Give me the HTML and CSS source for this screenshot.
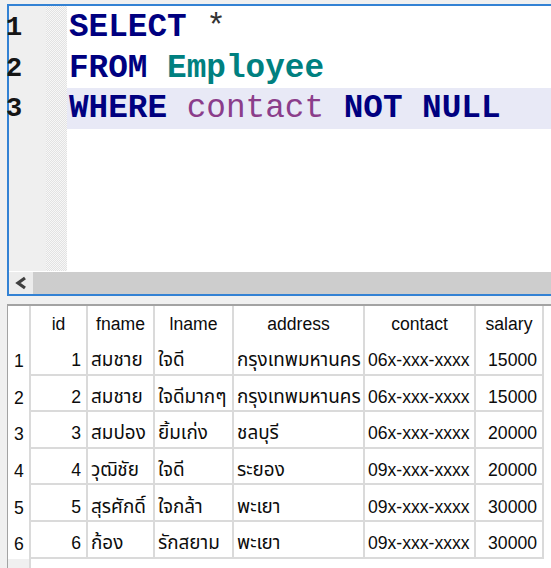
FILE: index.html
```html
<!DOCTYPE html>
<html>
<head>
<meta charset="utf-8">
<link rel="stylesheet" href="styles.css">
</head>
<body>
<div class="app">
  <div class="editor">
    <div class="editor-body">
      <div class="gutter">
        <div class="ln">1</div>
        <div class="ln">2</div>
        <div class="ln">3</div>
      </div>
      <div class="fold"></div>
      <div class="code">
        <div class="line"><span class="kw">SELECT</span> <span class="op">*</span></div>
        <div class="line"><span class="kw">FROM</span> <span class="tbl">Employee</span></div>
        <div class="line current"><span class="kw">WHERE</span> <span class="col">contact</span> <span class="kw">NOT NULL</span></div>
      </div>
    </div>
    <div class="hscroll">
      <div class="arrow"><svg class="chev" width="14" height="14" viewBox="0 0 14 14"><polyline points="11,2 4,7 11,12" fill="none" stroke="#404040" stroke-width="3.2"/></svg></div>
      <div class="track"></div>
    </div>
  </div>
  <div class="grid">
    <table>
      <colgroup>
        <col class="c-rh"><col class="c-id"><col class="c-fn"><col class="c-ln"><col class="c-ad"><col class="c-ct"><col class="c-sa"><col>
      </colgroup>
      <thead>
        <tr><th class="rh"></th><th>id</th><th>fname</th><th>lname</th><th>address</th><th>contact</th><th>salary</th><th class="rest"></th></tr>
      </thead>
      <tbody>
        <tr><td class="rh">1</td><td class="num">1</td><td class="th">สมชาย</td><td class="th">ใจดี</td><td class="th">กรุงเทพมหานคร</td><td>06x-xxx-xxxx</td><td class="num">15000</td><td class="rest"></td></tr>
        <tr><td class="rh">2</td><td class="num">2</td><td class="th">สมชาย</td><td class="th">ใจดีมากๆ</td><td class="th">กรุงเทพมหานคร</td><td>06x-xxx-xxxx</td><td class="num">15000</td><td class="rest"></td></tr>
        <tr><td class="rh">3</td><td class="num">3</td><td class="th">สมปอง</td><td class="th">ยิ้มเก่ง</td><td class="th">ชลบุรี</td><td>06x-xxx-xxxx</td><td class="num">20000</td><td class="rest"></td></tr>
        <tr><td class="rh">4</td><td class="num">4</td><td class="th">วุฒิชัย</td><td class="th">ใจดี</td><td class="th">ระยอง</td><td>09x-xxx-xxxx</td><td class="num">20000</td><td class="rest"></td></tr>
        <tr><td class="rh">5</td><td class="num">5</td><td class="th">สุรศักดิ์</td><td class="th">ใจกล้า</td><td class="th">พะเยา</td><td>09x-xxx-xxxx</td><td class="num">30000</td><td class="rest"></td></tr>
        <tr><td class="rh">6</td><td class="num">6</td><td class="th">ก้อง</td><td class="th">รักสยาม</td><td class="th">พะเยา</td><td>09x-xxx-xxxx</td><td class="num">30000</td><td class="rest"></td></tr>
        <tr class="filler"><td class="rh"></td><td colspan="7" class="rest"></td></tr>
      </tbody>
    </table>
  </div>
</div>
</body>
</html>
```

FILE: styles.css
```css
html, body {
  margin: 0;
  padding: 0;
}
body {
  background: #f0f0f0;
  width: 551px;
  height: 568px;
  overflow: hidden;
}
.app {
  padding-top: 4px;
  display: flex;
  flex-direction: column;
}
.editor {
  margin-left: 7px;
  width: 560px;
  border-top: 2px solid #3382d4;
  border-left: 2px solid #3382d4;
  border-bottom: 2px solid #3382d4;
  background: #ffffff;
  display: flex;
  flex-direction: column;
}
.editor-body {
  height: 266px;
  display: flex;
}
.gutter {
  width: 37px;
  height: 265px;
  background: #efefef;
  padding-top: 2px;
  box-sizing: border-box;
}
.ln {
  height: 40.6px;
  line-height: 40.6px;
  margin-left: -3px;
  font-family: "Liberation Mono", monospace;
  font-size: 27px;
  font-weight: bold;
  color: #151515;
}
.fold {
  width: 21px;
  height: 265px;
  background-image: repeating-conic-gradient(#e2e2e2 0 25%, #f7f7f7 0 50%);
  background-size: 2px 2px;
}
.code {
  flex: 1;
  padding-top: 1px;
  font-family: "Liberation Mono", monospace;
  font-size: 32.7px;
}
.line {
  height: 40.6px;
  line-height: 42px;
  padding-left: 2px;
  white-space: pre;
}
.line.current {
  background: #e8e9f6;
}
.kw {
  color: #000080;
  font-weight: bold;
}
.tbl {
  color: #008080;
  font-weight: bold;
}
.col {
  color: #8b3d8b;
}
.op {
  color: #333333;
}
.hscroll {
  height: 22px;
  display: flex;
  background: #cdcdcd;
}
.arrow {
  width: 24px;
  flex: none;
  background: #ececec;
  display: flex;
  align-items: center;
  justify-content: center;
}
.chev {
  display: block;
  flex: none;
}
.track {
  flex: 1;
}
.grid {
  margin-top: 8px;
  margin-left: 7px;
  border-top: 2px solid #a3a3a3;
  border-left: 1px solid #a3a3a3;
  background: #ffffff;
  height: 262px;
}
table {
  border-collapse: separate;
  border-spacing: 0;
  table-layout: fixed;
  width: 560px;
  font-family: "Liberation Sans", "Noto Sans Thai", "Tahoma", sans-serif;
  font-size: 17.6px;
  color: #0c0c0c;
}
.c-rh { width: 23px; }
.c-id { width: 57px; }
.c-fn { width: 67px; }
.c-ln { width: 79px; }
.c-ad { width: 131px; }
.c-ct { width: 111px; }
.c-sa { width: 68px; }
th, td {
  padding: 0 4px;
  white-space: nowrap;
  overflow: hidden;
  box-sizing: border-box;
  border-right: 2px solid #dadada;
}
th {
  height: 33px;
  padding-top: 4px;
  font-weight: normal;
  text-align: center;
}
td {
  height: 36.6px;
  line-height: 20px;
  padding-top: 8px;
  border-bottom: 2px solid #dadada;
  text-align: left;
  padding-left: 3px;
}
td.th {
  font-size: 18.9px;
}
td.num {
  text-align: right;
  padding-right: 5px;
}
th.rh, td.rh {
  padding-left: 6px;
  border-bottom: none;
}
th.rest, td.rest {
  border-right: none;
  border-bottom: none;
}
.filler td {
  height: 12px;
  padding-top: 0;
  border-bottom: none;
}
.filler td.rh {
  background: #f0f0f0;
}
```
